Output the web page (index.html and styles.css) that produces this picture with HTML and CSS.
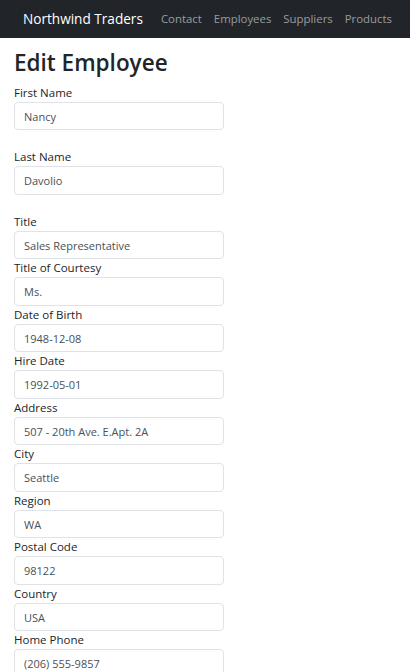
FILE: index.html
```html
<!DOCTYPE html>
<html lang="en">
<head>
<meta charset="utf-8">
<title>Edit Employee - Northwind Traders</title>
<link rel="stylesheet" href="styles.css">
</head>
<body>
<nav class="navbar">
  <a class="brand" href="#">Northwind Traders</a>
  <ul class="nav">
    <li><a href="#">Contact</a></li>
    <li><a href="#">Employees</a></li>
    <li><a href="#">Suppliers</a></li>
    <li><a href="#">Products</a></li>
  </ul>
</nav>
<main class="container">
  <h1 class="title">Edit Employee</h1>
  <form class="form">
    <div class="field">
      <label>First Name</label>
      <input class="control" type="text" value="Nancy">
      <span class="field-msg"></span>
    </div>
    <div class="field">
      <label>Last Name</label>
      <input class="control" type="text" value="Davolio">
      <span class="field-msg"></span>
    </div>
    <div class="field">
      <label>Title</label>
      <input class="control" type="text" value="Sales Representative">
    </div>
    <div class="field">
      <label>Title of Courtesy</label>
      <input class="control" type="text" value="Ms.">
    </div>
    <div class="field">
      <label>Date of Birth</label>
      <input class="control" type="text" value="1948-12-08">
    </div>
    <div class="field">
      <label>Hire Date</label>
      <input class="control" type="text" value="1992-05-01">
    </div>
    <div class="field">
      <label>Address</label>
      <input class="control" type="text" value="507 - 20th Ave. E.Apt. 2A">
    </div>
    <div class="field">
      <label>City</label>
      <input class="control" type="text" value="Seattle">
    </div>
    <div class="field">
      <label>Region</label>
      <input class="control" type="text" value="WA">
    </div>
    <div class="field">
      <label>Postal Code</label>
      <input class="control" type="text" value="98122">
    </div>
    <div class="field">
      <label>Country</label>
      <input class="control" type="text" value="USA">
    </div>
    <div class="field">
      <label>Home Phone</label>
      <input class="control" type="text" value="(206) 555-9857">
    </div>
  </form>
</main>
</body>
</html>
```

FILE: styles.css
```css
* { box-sizing: border-box; }

body {
  margin: 0;
  font-family: "Open Sans", "Noto Sans", sans-serif;
  font-size: 11.5px;
  line-height: 1.5;
  color: #212529;
  background: #fff;
}

.navbar {
  height: 38px;
  background: #212529;
  display: flex;
  align-items: center;
  padding: 0 12px 0 23px;
  white-space: nowrap;
}

.brand {
  flex-shrink: 0;
  color: #fff;
  text-decoration: none;
  font-size: 13.6px;
  margin-right: 12px;
}

.nav {
  list-style: none;
  margin: 0;
  padding: 0;
  display: flex;
}

.nav a {
  display: block;
  padding: 0 6px;
  color: rgba(255, 255, 255, 0.55);
  text-decoration: none;
  font-size: 11.4px;
}

.container {
  padding: 11px 14px 20px;
}

.title {
  margin: 0 0 6px;
  font-size: 22.5px;
  font-weight: 600;
  line-height: 28.8px;
}

.form {
  display: flex;
  flex-direction: column;
}

.field {
  display: flex;
  flex-direction: column;
  width: 210px;
}

.field label {
  display: block;
  line-height: 18px;
}

.control {
  display: block;
  width: 210px;
  height: 28.5px;
  padding: 4px 9px;
  font-family: inherit;
  font-size: 11px;
  color: #495057;
  background: #fff;
  border: 1px solid #dfe2e6;
  border-radius: 4px;
}

.field-msg {
  display: block;
  height: 18px;
}
```
